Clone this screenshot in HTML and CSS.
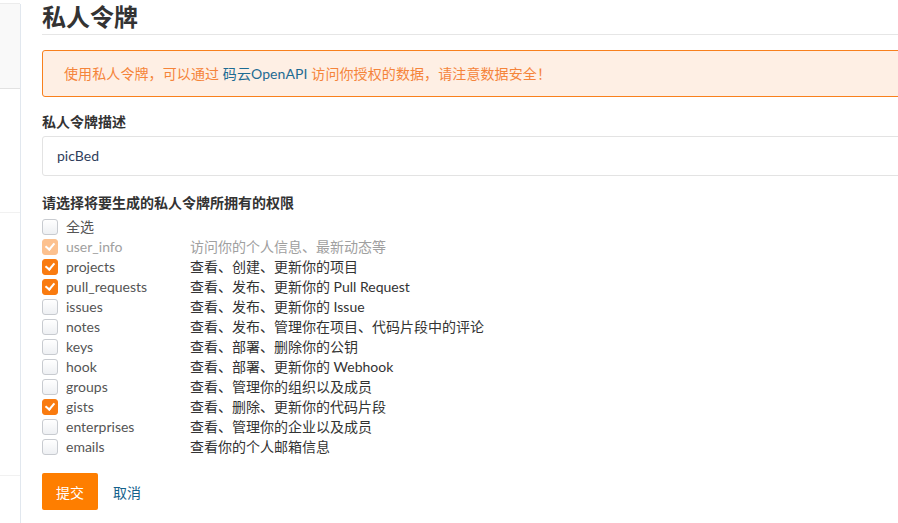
FILE: index.html
```html
<!DOCTYPE html>
<html lang="zh">
<head>
<meta charset="utf-8">
<title>私人令牌</title>
<link rel="stylesheet" href="styles.css">
</head>
<body>
<div class="page">
  <aside class="sidebar">
    <div class="side-card"></div>
    <div class="side-sep sep1"></div>
    <div class="side-sep sep2"></div>
  </aside>
  <main class="main">
    <h1 class="title">私人令牌</h1>
    <div class="alert">使用私人令牌，可以通过 <a class="link" href="#">码云OpenAPI</a> 访问你授权的数据，请注意数据安全！</div>
    <label class="field-label">私人令牌描述</label>
    <div class="input">picBed</div>
    <div class="field-label perm-label">请选择将要生成的私人令牌所拥有的权限</div>
    <ul class="perms">
      <li class="row"><span class="cb"></span><span class="name all">全选</span></li>
      <li class="row disabled"><span class="cb on"></span><span class="name">user_info</span><span class="desc">访问你的个人信息、最新动态等</span></li>
      <li class="row"><span class="cb on"></span><span class="name">projects</span><span class="desc">查看、创建、更新你的项目</span></li>
      <li class="row"><span class="cb on"></span><span class="name">pull_requests</span><span class="desc">查看、发布、更新你的 Pull Request</span></li>
      <li class="row"><span class="cb"></span><span class="name">issues</span><span class="desc">查看、发布、更新你的 Issue</span></li>
      <li class="row"><span class="cb"></span><span class="name">notes</span><span class="desc">查看、发布、管理你在项目、代码片段中的评论</span></li>
      <li class="row"><span class="cb"></span><span class="name">keys</span><span class="desc">查看、部署、删除你的公钥</span></li>
      <li class="row"><span class="cb"></span><span class="name">hook</span><span class="desc">查看、部署、更新你的 Webhook</span></li>
      <li class="row"><span class="cb"></span><span class="name">groups</span><span class="desc">查看、管理你的组织以及成员</span></li>
      <li class="row"><span class="cb on"></span><span class="name">gists</span><span class="desc">查看、删除、更新你的代码片段</span></li>
      <li class="row"><span class="cb"></span><span class="name">enterprises</span><span class="desc">查看、管理你的企业以及成员</span></li>
      <li class="row"><span class="cb"></span><span class="name">emails</span><span class="desc">查看你的个人邮箱信息</span></li>
    </ul>
    <div class="actions">
      <button class="btn-submit">提交</button>
      <a class="cancel" href="#">取消</a>
    </div>
  </main>
</div>
</body>
</html>
```
FILE: styles.css
```css
html, body {
  margin: 0;
  padding: 0;
  background: #fff;
  overflow: hidden;
}
body {
  font-family: "Lato", "Noto Sans CJK SC", sans-serif;
  font-size: 14px;
  color: #333;
}
.page {
  display: flex;
  width: 1000px;
  height: 523px;
}
.sidebar {
  width: 20px;
  flex: none;
  border-right: 1px solid #e1e7ee;
  margin-top: 4px;
  position: relative;
}
.side-card {
  height: 84px;
  margin-top: -1px;
  background: #f9f9f9;
  border-top: 1px solid #ececec;
  border-bottom: 1px solid #e2e2e2;
}
.side-sep {
  position: absolute;
  left: 0;
  right: 0;
  height: 1px;
  background: #f1f1f1;
}
.sep1 { top: 208px; }
.sep2 { top: 471px; }
.main {
  flex: 1;
  padding-left: 21px;
}
.title {
  margin: 0;
  font-size: 24px;
  font-weight: bold;
  line-height: 30px;
  padding-top: 2px;
  padding-bottom: 2px;
  color: #333;
  border-bottom: 1px solid #e6e6e6;
}
.alert {
  margin-top: 15px;
  height: 45px;
  line-height: 45px;
  padding-left: 21px;
  background: #feefe4;
  border: 1px solid #f8801d;
  border-radius: 3px;
  color: #f5843a;
  letter-spacing: 0.1px;
}
.link {
  color: #1d6b93;
  text-decoration: none;
}
.field-label {
  display: block;
  margin-top: 16px;
  font-weight: bold;
  line-height: 18px;
  color: #333;
}
.input {
  margin-top: 5px;
  height: 38px;
  line-height: 38px;
  padding-left: 14px;
  border: 1px solid #e3e3e3;
  border-radius: 3px;
  color: #2f3e5c;
}
.perm-label {
  margin-top: 18px;
}
.perms {
  list-style: none;
  margin: 5px 0 0;
  padding: 0;
}
.row {
  display: flex;
  align-items: center;
  height: 20px;
  line-height: 20px;
}
.cb {
  flex: none;
  width: 14px;
  height: 14px;
  border: 1px solid #c8cbd0;
  border-radius: 3px;
  background: linear-gradient(#fff, #eef0f3);
  position: relative;
}
.cb.on {
  background: #f97b10;
  border-color: #f97b10;
}
.cb.on::after {
  content: "";
  position: absolute;
  left: 4px;
  top: 1px;
  width: 4px;
  height: 7px;
  border: solid #fff;
  border-width: 0 2.5px 2.5px 0;
  transform: rotate(40deg);
}
.disabled .cb.on {
  background: #fcc18f;
  border-color: #fcc18f;
}
.name {
  width: 124px;
  padding-left: 8px;
  flex: none;
  color: #555;
}
.desc {
  color: #333;
}
.disabled .name,
.disabled .desc {
  color: #a0a0a0;
}
.actions {
  display: flex;
  align-items: center;
  margin-top: 16px;
}
.btn-submit {
  width: 56px;
  height: 37px;
  border: none;
  border-radius: 2px;
  background: #fe7e00;
  color: #fff;
  font-family: "Noto Sans CJK SC", sans-serif;
  font-size: 14px;
  padding: 0;
}
.cancel {
  margin-left: 15px;
  color: #14628c;
  text-decoration: none;
  font-size: 14px;
}
```
